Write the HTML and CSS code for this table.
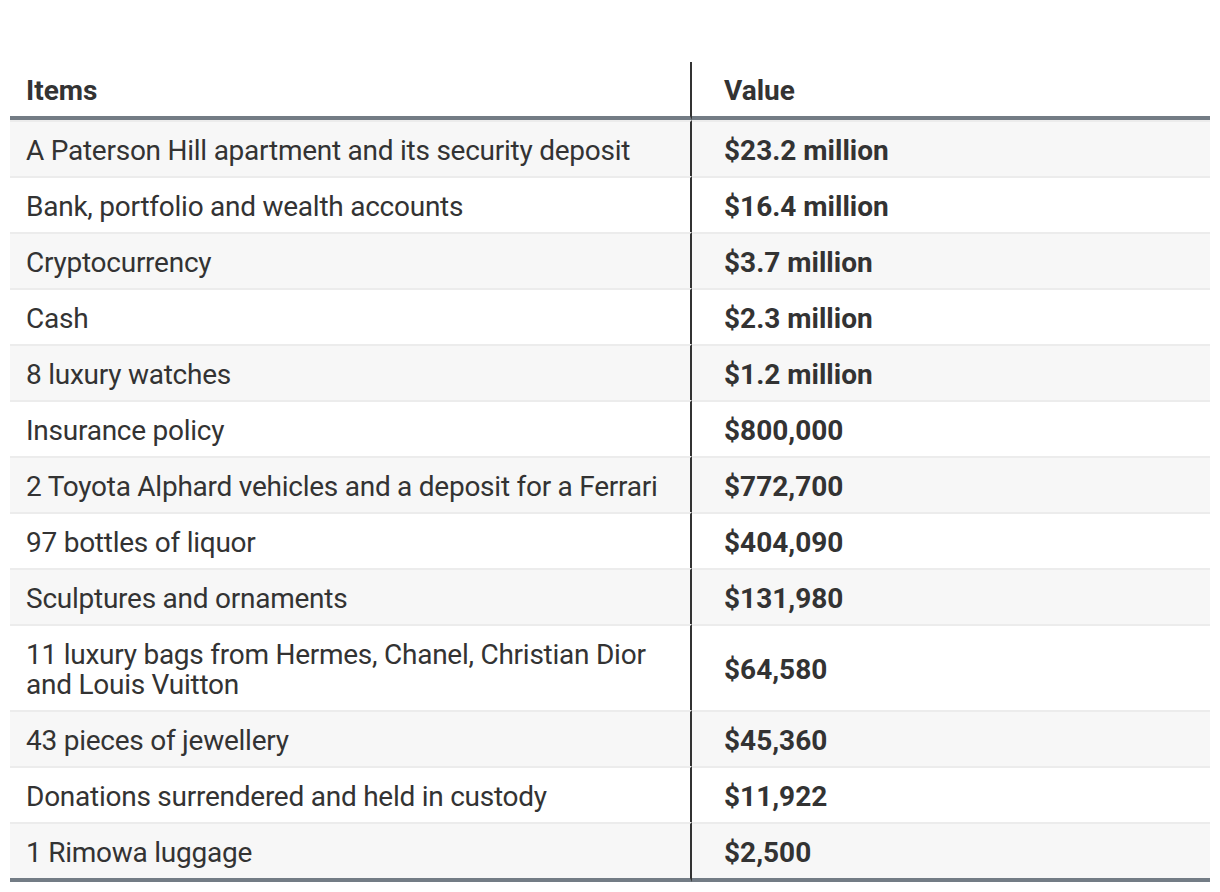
FILE: index.html
```html
<!DOCTYPE html>
<html lang="en">
<head>
<meta charset="utf-8">
<title>Seized items</title>
<link rel="stylesheet" href="styles.css">
</head>
<body>
<table class="assets">
  <thead>
    <tr>
      <th class="item">Items</th>
      <th class="value">Value</th>
    </tr>
  </thead>
  <tbody>
    <tr><td class="item">A Paterson Hill apartment and its security deposit</td><td class="value">$23.2 million</td></tr>
    <tr><td class="item">Bank, portfolio and wealth accounts</td><td class="value">$16.4 million</td></tr>
    <tr><td class="item">Cryptocurrency</td><td class="value">$3.7 million</td></tr>
    <tr><td class="item">Cash</td><td class="value">$2.3 million</td></tr>
    <tr><td class="item">8 luxury watches</td><td class="value">$1.2 million</td></tr>
    <tr><td class="item">Insurance policy</td><td class="value">$800,000</td></tr>
    <tr><td class="item">2 Toyota Alphard vehicles and a deposit for a Ferrari</td><td class="value">$772,700</td></tr>
    <tr><td class="item">97 bottles of liquor</td><td class="value">$404,090</td></tr>
    <tr><td class="item">Sculptures and ornaments</td><td class="value">$131,980</td></tr>
    <tr><td class="item">11 luxury bags from Hermes, Chanel, Christian Dior<br>and Louis Vuitton</td><td class="value">$64,580</td></tr>
    <tr><td class="item">43 pieces of jewellery</td><td class="value">$45,360</td></tr>
    <tr><td class="item">Donations surrendered and held in custody</td><td class="value">$11,922</td></tr>
    <tr><td class="item">1 Rimowa luggage</td><td class="value">$2,500</td></tr>
  </tbody>
</table>
</body>
</html>
```
FILE: styles.css
```css
html, body {
  margin: 0;
  padding: 0;
  background: #ffffff;
}

body {
  padding: 62px 10px 0 10px;
  font-family: Roboto, "Liberation Sans", Arial, sans-serif;
  color: #333333;
}

.assets {
  width: 1200px;
  border-collapse: separate;
  border-spacing: 0;
  font-size: 28px;
  line-height: 30px;
}

.assets th,
.assets td {
  padding: 14px 0 10px 0;
  text-align: left;
  vertical-align: middle;
}

.assets th {
  font-weight: 700;
  border-bottom: 4px solid #737c85;
}

.assets .item {
  width: 664px;
  padding-left: 16px;
  border-right: 2px solid #333333;
}

.assets .value {
  padding-left: 32px;
}

.assets td {
  border-top: 2px solid #ececec;
  font-weight: 400;
}

.assets td.item {
  letter-spacing: -0.25px;
}

.assets td.value {
  font-weight: 700;
}

.assets tbody tr:nth-child(odd) td {
  background: #f7f7f7;
}

.assets tbody tr:last-child td {
  border-bottom: 4px solid #737c85;
}
```
